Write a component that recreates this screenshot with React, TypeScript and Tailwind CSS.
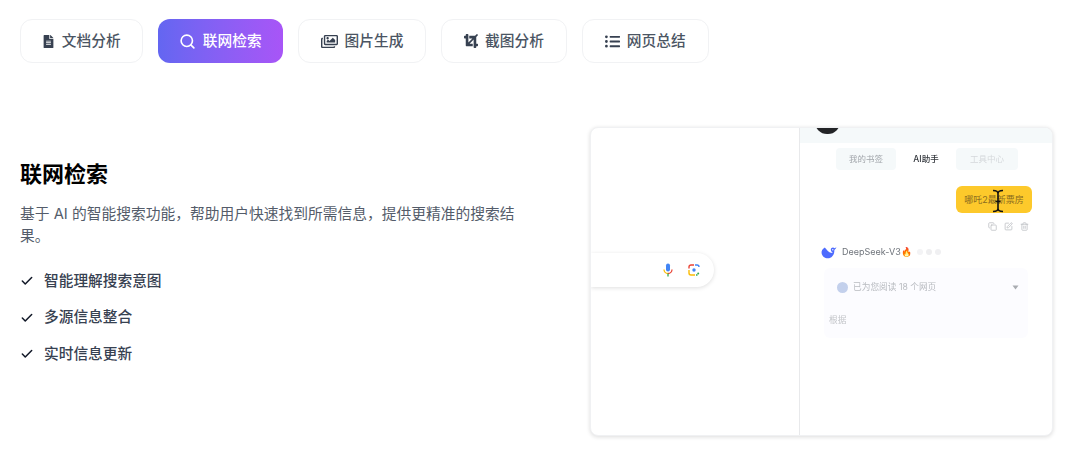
import { Check, Search, Copy, SquarePen, Trash2 } from "lucide-react";
import { FaFileAlt, FaRegImages, FaCrop, FaListUl } from "react-icons/fa";

const FONT = "font-['Inter','Noto_Sans_CJK_SC',sans-serif]";

function Tab({ icon, label, active, w }: { icon: React.ReactNode; label: string; active?: boolean; w: string }) {
  return (
    <div
      className={
        "flex h-11 items-center justify-center gap-[7px] rounded-xl text-[14.7px] font-medium " +
        w +
        (active
          ? " bg-gradient-to-r from-[#6366f1] to-[#a855f7] text-white"
          : " border border-[#f1f2f4] bg-white text-[#4b5563]")
      }
    >
      {icon}
      <span>{label}</span>
    </div>
  );
}

function Item({ label }: { label: string }) {
  return (
    <li className="flex h-[22px] items-center gap-[10px] text-[14.7px] font-medium text-[#374151]">
      <Check size={14} strokeWidth={2.6} className="text-[#111827]" />
      <span>{label}</span>
    </li>
  );
}

export default function App() {
  return (
    <div className={"h-[461px] w-[1080px] overflow-hidden bg-white blur-[0.3px] " + FONT}>
      <div className="flex gap-[15px] pl-5 pt-[19px]">
        <Tab w="w-[122.5px]" label="文档分析" icon={<FaFileAlt size={13} className="text-[#374151]" />} />
        <Tab w="w-[125.5px]" active label="联网检索" icon={<Search size={17} strokeWidth={2.3} />} />
        <Tab w="w-[128px]" label="图片生成" icon={<FaRegImages size={17} className="text-[#374151]" />} />
        <Tab w="w-[126px]" label="截图分析" icon={<FaCrop size={14} className="text-[#374151]" />} />
        <Tab w="w-[126.5px]" label="网页总结" icon={<FaListUl size={15} className="text-[#374151]" />} />
      </div>

      <div className="flex pl-5 pt-[64px]">
        <div className="w-[570px] pt-[33px]">
          <h2 className="text-[22px] font-bold leading-[28px] text-black">联网检索</h2>
          <p className="mt-[15px] w-[500px] text-[14.75px] leading-[22px] text-[#545c6a]">
            基于 AI 的智能搜索功能，帮助用户快速找到所需信息，提供更精准的搜索结果。
          </p>
          <ul className="mt-[23px] flex flex-col gap-[14.5px]">
            <Item label="智能理解搜索意图" />
            <Item label="多源信息整合" />
            <Item label="实时信息更新" />
          </ul>
        </div>

        <div className="relative flex h-[309px] w-[463px] overflow-hidden rounded-lg border border-[#f0f1f3] bg-white shadow-[0_1px_4px_rgba(0,0,0,0.14)]">
          {/* left pane */}
          <div className="w-[209px] shrink-0 border-r border-[#e8e9eb] pt-[125px]">
            <div className="flex h-[34px] w-[123px] items-center justify-end gap-[15px] rounded-r-full bg-white pr-[14px] shadow-[0_1px_4px_rgba(0,0,0,0.13)]">
              <svg width="10" height="14" viewBox="0 0 10 14">
                <rect x="3" y="0.5" width="4" height="8" rx="2" fill="#4285f4" />
                <path d="M1 6.500a4 4 0 0 0 4 4" fill="none" stroke="#fbbc05" strokeWidth="1.3" />
                <path d="M9 6.500a4 4 0 0 1-4 4" fill="none" stroke="#ea4335" strokeWidth="1.3" />
                <path d="M5 10.500V13.500" stroke="#34a853" strokeWidth="1.3" />
              </svg>
              <svg width="12" height="12" viewBox="0 0 12 12" fill="none" strokeWidth="1.4">
                <path d="M1 4.500V3a2 2 0 0 1 2-2h3" stroke="#ea4335" />
                <path d="M1 6v3a2 2 0 0 0 2 2h4" stroke="#fbbc05" />
                <path d="M7 1h2a2 2 0 0 1 2 2" stroke="#4285f4" />
                <path d="M8 11h1.500" stroke="#34a853" />
                <circle cx="6" cy="6" r="1.700" fill="#4285f4" stroke="none" />
                <circle cx="10.200" cy="9.500" r="1" fill="#34a853" stroke="none" />
              </svg>
            </div>
          </div>

          {/* right pane */}
          <div className="flex flex-1 flex-col blur-[0.4px]">
            <div className="relative h-[15px] shrink-0 overflow-hidden bg-[#f5f9fa]">
              <div className="absolute -top-[18px] left-[15px] h-[24px] w-[25px] rounded-full bg-[#232427]" />
            </div>
            <div className="ml-[36px] mt-[5px] flex h-[22px] w-[182px] items-center text-[8.5px]">
              <div className="flex h-full w-[60px] items-center justify-center rounded-sm bg-[#f5f9fa] text-[#a2a6ab]">我的书签</div>
              <div className="flex h-full w-[60px] items-center justify-center font-medium text-[#33373d]">AI助手</div>
              <div className="flex h-full w-[62px] items-center justify-center rounded-sm bg-[#f5f9fa] text-[#d5d8db]">工具中心</div>
            </div>
            <div className="relative ml-[156px] mt-[16px] flex h-[27px] w-[76px] items-center justify-center rounded-md bg-[#fdc92b] text-[9px] text-[#8a6b20]">
              哪吒2最新票房
              <svg className="absolute left-[36px] top-[3px]" width="12" height="24" viewBox="0 0 12 24" fill="none" stroke="#111" strokeWidth="1.6">
                <path d="M1 1.500c3 0 5 1 5 3V19.500c0 2 -2 3 -5 3M11 1.500c-3 0 -5 1 -5 3V19.500c0 2 2 3 5 3" />
                <path d="M3.500 12.500h5" />
              </svg>
            </div>
            <div className="ml-[188px] mt-[9px] flex gap-[7px] text-[#b9bcc0]">
              <Copy size={9} />
              <SquarePen size={9} />
              <Trash2 size={9} />
            </div>
            <div className="ml-[21px] mt-[13px] flex h-[16px] items-center gap-[5px]">
              <svg width="16" height="13" viewBox="0 0 16 13">
                <path d="M15.500 1.200c-.7.300-1.300.8-1.900 1.100-.9-.9-2.100-1-3.100-.2-.9.800-.9 2-.2 3.200.5.800 1 1.300 1.500 1.600-1.700.2-3.500-.6-5.200-2.200C5.600 3.700 4.600 2.300 3.800 1.400 1.400 2.800.2 5 .6 7.300c.5 3.100 3.200 5 6.200 5 3.700 0 6.200-2.900 6.500-6.800.1-.6 0-1.100.1-1.500.9-.8 1.600-2 2.100-2.800z" fill="#4d6bfe" />
                <circle cx="11.800" cy="3.800" r="0.700" fill="#fff" />
              </svg>
              <span className="text-[9px] text-[#6f747b]">DeepSeek-V3🔥</span>
              <div className="flex gap-[3px]">
                <span className="h-[6px] w-[6px] rounded-full bg-[#f3f3f5]" />
                <span className="h-[6px] w-[6px] rounded-full bg-[#eeeef0]" />
                <span className="h-[6px] w-[6px] rounded-full bg-[#f0f0f2]" />
              </div>
            </div>
            <div className="ml-[24px] mt-[8px] h-[70px] w-[204px] rounded-md bg-[#fcfcff] pl-[4px] pt-[13px]">
              <div className="flex items-center pl-[9px] pr-[9px] text-[8.7px] text-[#b8bbc0]">
                <span className="h-[11px] w-[11px] rounded-full bg-[#c3d0ec]" />
                <span className="ml-[5px] flex-1">已为您阅读 18 个网页</span>
                <svg width="7" height="5" viewBox="0 0 7 5"><path d="M0.500 0.500h6L3.500 4.500z" fill="#a9acb1" /></svg>
              </div>
              <div className="mt-[20px] pl-[1px] text-[8.7px] text-[#c3c5c9]">根据</div>
            </div>
          </div>
        </div>
      </div>
    </div>
  );
}
